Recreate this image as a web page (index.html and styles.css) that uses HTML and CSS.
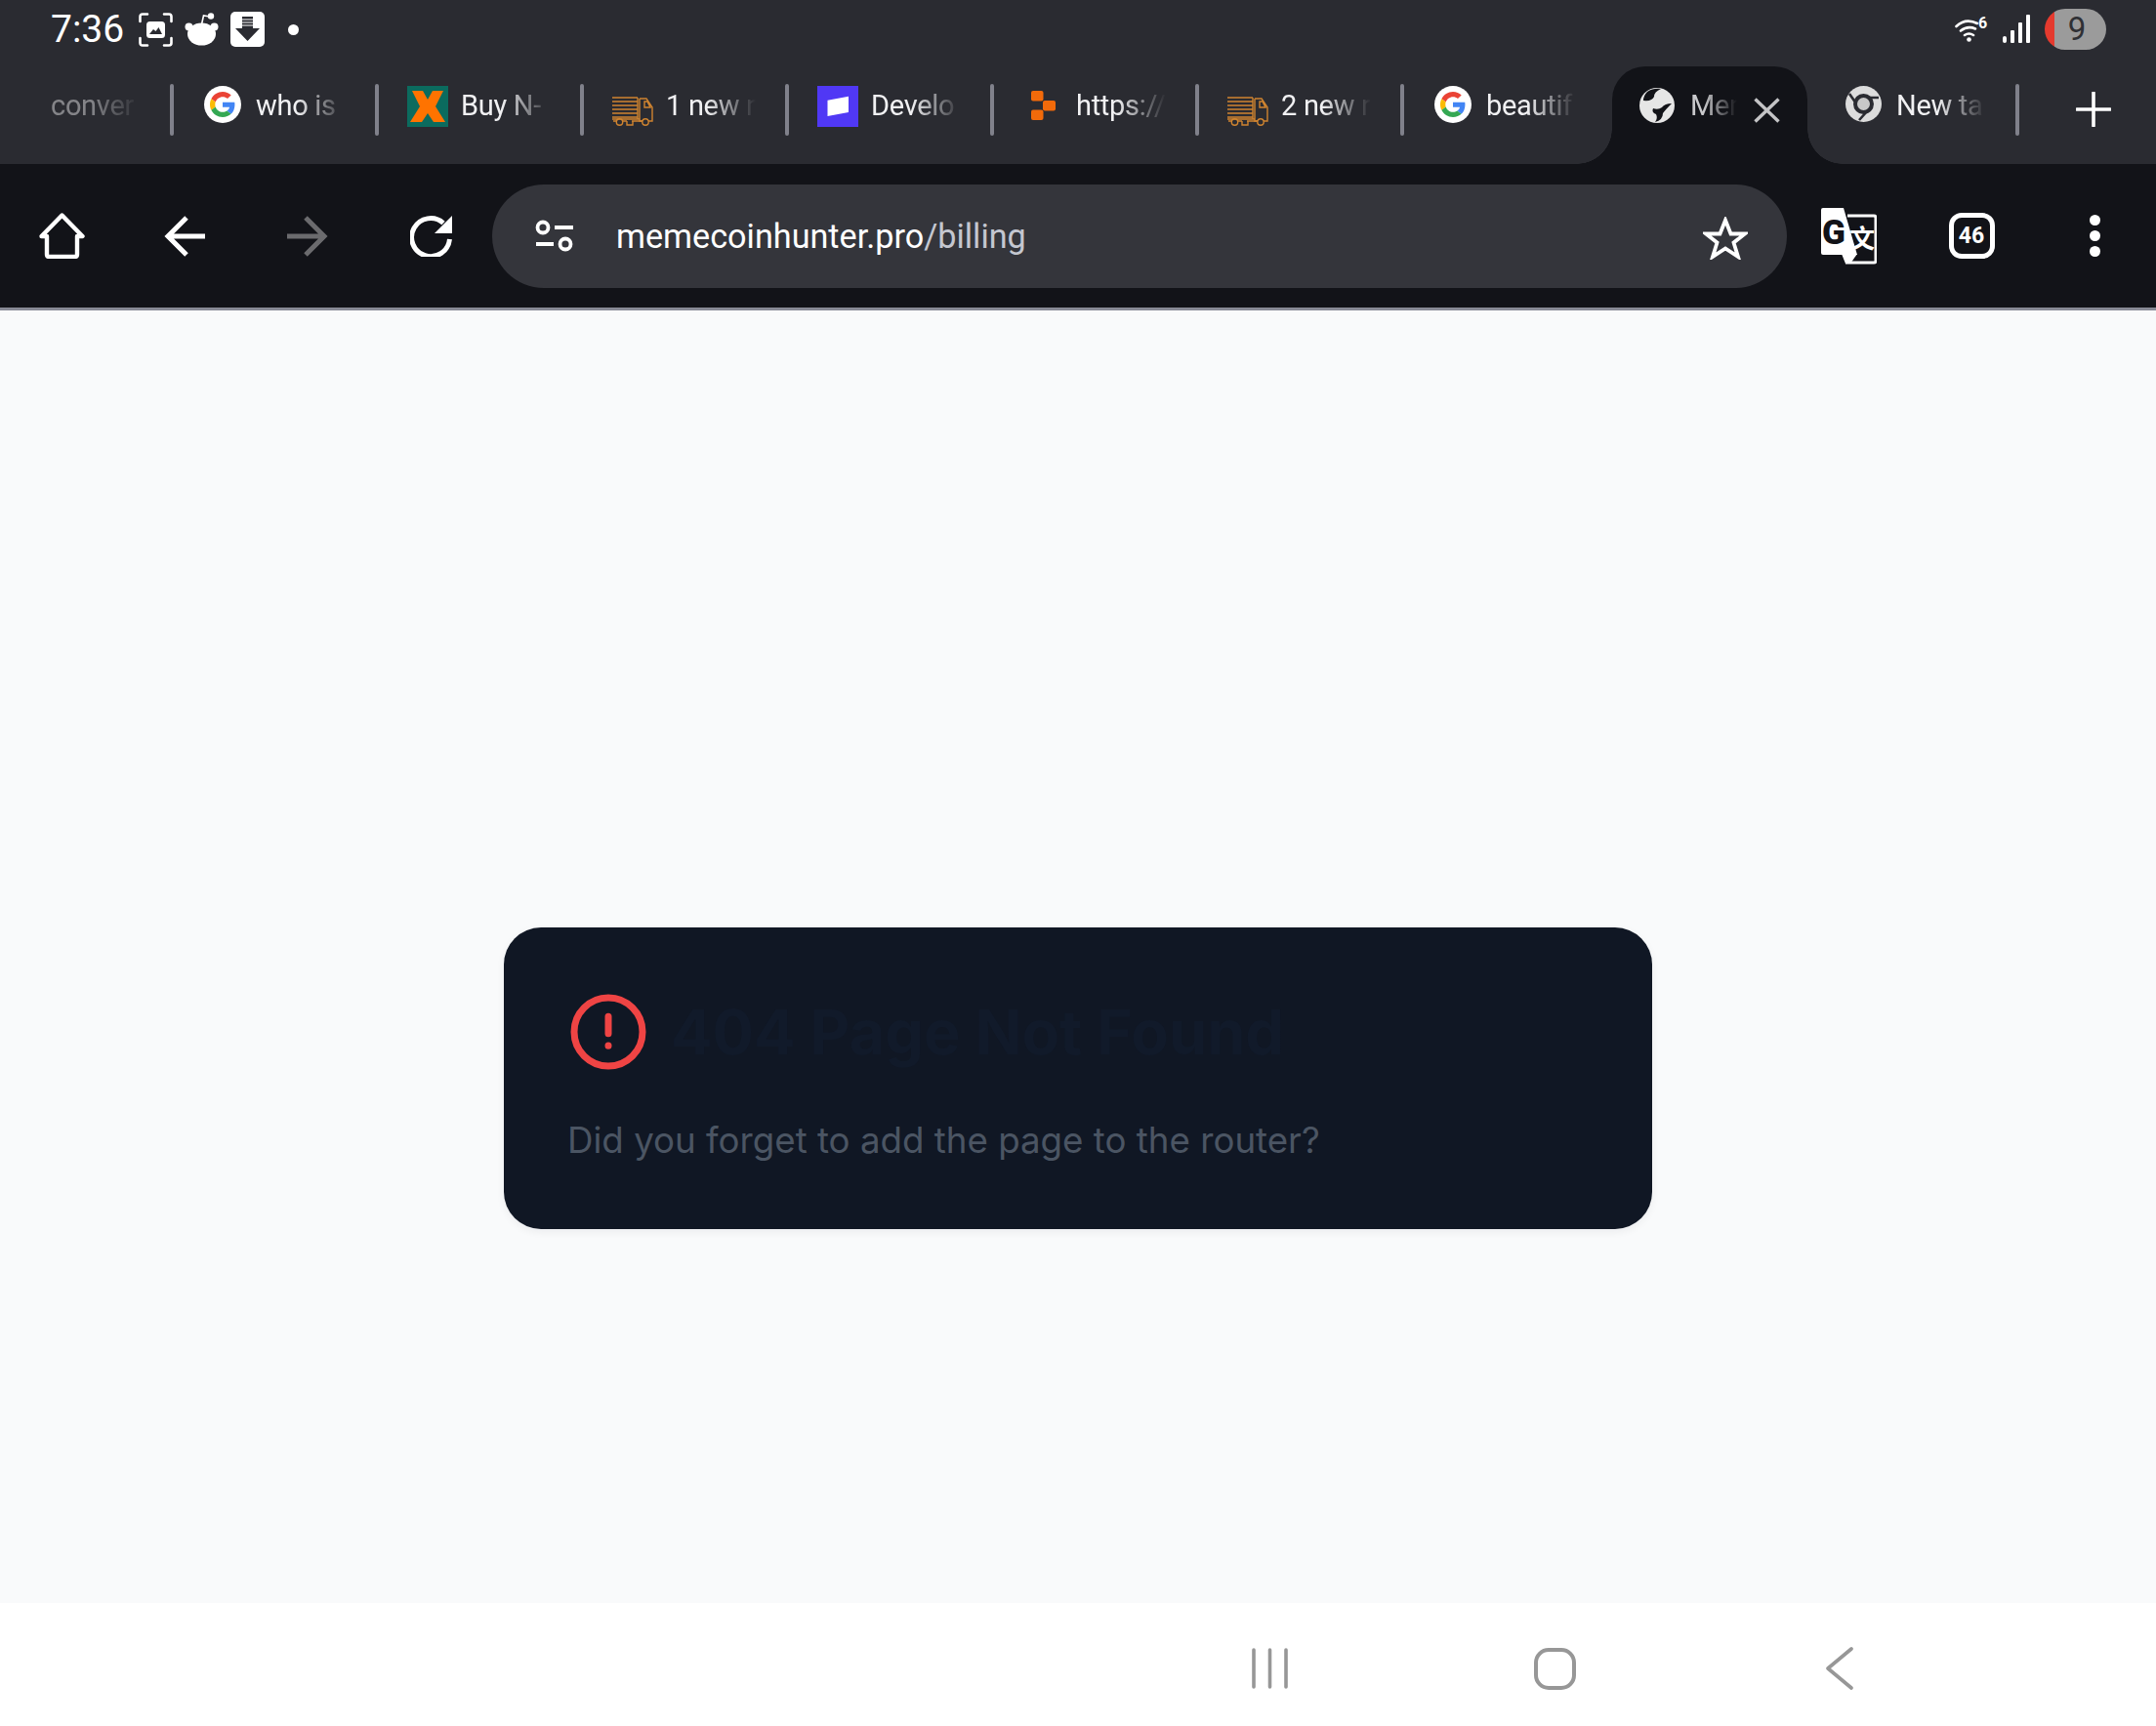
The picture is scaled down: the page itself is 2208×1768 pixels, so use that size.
FILE: index.html
```html
<!DOCTYPE html>
<html lang="en">
<head>
    <meta charset="UTF-8">
    <meta name="viewport" content="width=device-width, initial-scale=1.0">
    <title>memecoinhunter.pro/billing</title>
    <link rel="stylesheet" href="styles.css">
</head>
<body>
    <svg class="defs" width="0" height="0">
        <symbol id="g-logo" viewBox="0 0 48 48">
            <path fill="#EA4335" d="M24 9.5c3.54 0 6.71 1.22 9.21 3.6l6.85-6.85C35.9 2.38 30.47 0 24 0 14.62 0 6.51 5.38 2.56 13.22l7.98 6.19C12.43 13.72 17.74 9.5 24 9.5z"/>
            <path fill="#4285F4" d="M46.98 24.55c0-1.57-.15-3.09-.38-4.55H24v9.02h12.94c-.58 2.96-2.26 5.48-4.78 7.18l7.73 6c4.51-4.18 7.09-10.36 7.09-17.65z"/>
            <path fill="#FBBC05" d="M10.53 28.59c-.48-1.45-.76-2.99-.76-4.59s.27-3.14.76-4.59l-7.98-6.19C.92 16.46 0 20.12 0 24c0 3.88.92 7.54 2.56 10.78l7.97-6.19z"/>
            <path fill="#34A853" d="M24 48c6.48 0 11.93-2.13 15.89-5.81l-7.73-6c-2.15 1.45-4.92 2.3-8.16 2.3-6.26 0-11.57-4.22-13.47-9.91l-7.98 6.19C6.51 42.62 14.62 48 24 48z"/>
        </symbol>
        <symbol id="google-fav" viewBox="0 0 38 38">
            <circle cx="19" cy="19" r="19" fill="#fff"/>
            <use href="#g-logo" x="6" y="6" width="26" height="26"/>
        </symbol>
        <symbol id="truck" viewBox="0 0 42 30">
            <g fill="none" stroke="#cf8430" stroke-width="1.4">
                <path d="M0 1H26M0 5H26M0 9H26M0 13H26M0 17H26M0 21H26"/>
                <path d="M26 1V23"/>
                <path d="M28 2H35L41 11V25H37M28 2V25H31M33 5H36L39 11H33Z"/>
                <path d="M1 25H4M11 25H15M20 25H31M0 23H28"/>
                <circle cx="7.500" cy="26" r="3.200"/>
                <circle cx="34" cy="26" r="3.200"/>
                <path d="M15 25V29H21V25"/>
            </g>
        </symbol>
    </svg>

    <div class="screen">
        <header class="browser">
            <div class="status-bar">
                <div class="status-left">
                    <span class="clock">7:36</span>
                    <svg class="status-icon" width="35" height="35" viewBox="0 0 35 35">
                        <path d="M1.500 9V4Q1.500 1.500 4 1.500H9M26 1.500H31Q33.500 1.500 33.500 4V9M33.500 26V31Q33.500 33.500 31 33.500H26M9 33.500H4Q1.500 33.500 1.500 31V26" fill="none" stroke="#fff" stroke-width="2.600" stroke-linecap="round"/>
                        <rect x="8" y="9" width="19" height="17" rx="3.500" fill="#fff"/>
                        <path d="M11 22L15 17L17.500 19L20.500 15L24 22Z" fill="#2a2b31"/>
                    </svg>
                    <svg class="status-icon" width="35" height="34" viewBox="0 0 35 34">
                        <ellipse cx="17.500" cy="22" rx="14.500" ry="11.500" fill="#fff"/>
                        <circle cx="4.500" cy="14.500" r="4" fill="#fff"/>
                        <circle cx="30.500" cy="14.500" r="4" fill="#fff"/>
                        <path d="M17.500 12L19.500 3L26 4" fill="none" stroke="#fff" stroke-width="1.600"/>
                        <circle cx="27" cy="3.500" r="3.200" fill="#fff"/>
                    </svg>
                    <svg class="status-icon" width="35" height="36" viewBox="0 0 35 36">
                        <rect width="35" height="36" rx="5" fill="#fff"/>
                        <path d="M12 5H23V17H30L17.500 30L5 17H12Z" fill="#2a2b31"/>
                        <path d="M12 8H23M12 11H23M12 14H23" stroke="#fff" stroke-width="1"/>
                    </svg>
                    <span class="status-dot"></span>
                </div>
                <div class="status-right">
                    <svg class="wifi" width="36" height="34" viewBox="0 -4 36 34">
                        <path d="M1.500 10Q11 1 23 7M6 14.500Q13 9 21 12.500M10 19Q14.500 16 19 19" fill="none" stroke="#fff" stroke-width="2.600" stroke-linecap="round"/>
                        <circle cx="14.500" cy="23.500" r="2.300" fill="#fff"/>
                        <text x="24" y="12" class="wifi-num">6</text>
                    </svg>
                    <svg width="28" height="30" viewBox="0 0 28 30">
                        <g fill="#fff">
                            <rect x="0" y="22" width="4" height="7" rx="2"/>
                            <rect x="8" y="16" width="4" height="13" rx="1"/>
                            <rect x="16" y="8" width="4" height="21" rx="1"/>
                            <rect x="24" y="0" width="4" height="29" rx="1"/>
                        </g>
                    </svg>
                    <span class="battery">9</span>
                </div>
            </div>

            <nav class="tab-strip">
                <div class="tab tab-first">
                    <span class="tab-title">conver</span>
                </div>
                <span class="tab-sep"></span>
                <div class="tab">
                    <span class="favicon"><svg width="38" height="38"><use href="#google-fav"/></svg></span>
                    <span class="tab-title">who is</span>
                </div>
                <span class="tab-sep"></span>
                <div class="tab">
                    <span class="favicon">
                        <svg width="42" height="42" viewBox="0 0 42 42">
                            <rect width="42" height="42" fill="#0b6b5e"/>
                            <path d="M5 5H16L21 14L26 5H37L29 21L39 37H27L21 28L15 37H3L13 21Z" fill="#ff7300"/>
                        </svg>
                    </span>
                    <span class="tab-title">Buy N-</span>
                </div>
                <span class="tab-sep"></span>
                <div class="tab">
                    <span class="favicon"><svg class="fav-low" width="42" height="30"><use href="#truck"/></svg></span>
                    <span class="tab-title">1 new n</span>
                </div>
                <span class="tab-sep"></span>
                <div class="tab">
                    <span class="favicon">
                        <svg width="42" height="42" viewBox="0 0 42 42">
                            <rect width="42" height="42" fill="#5038f5"/>
                            <path d="M10.500 14.700L32 10.700V27L10.500 31Z" fill="#fff"/>
                        </svg>
                    </span>
                    <span class="tab-title">Develo</span>
                </div>
                <span class="tab-sep"></span>
                <div class="tab">
                    <span class="favicon">
                        <svg class="fav-mid" width="25" height="30" viewBox="0 0 25 30">
                            <g fill="#f26a0a">
                                <rect width="12.500" height="10.500" rx="2"/>
                                <rect x="12" y="10" width="13" height="10.500" rx="2"/>
                                <rect y="19.500" width="12.500" height="10.500" rx="2"/>
                            </g>
                        </svg>
                    </span>
                    <span class="tab-title">https://</span>
                </div>
                <span class="tab-sep"></span>
                <div class="tab">
                    <span class="favicon"><svg class="fav-low" width="42" height="30"><use href="#truck"/></svg></span>
                    <span class="tab-title">2 new r</span>
                </div>
                <span class="tab-sep"></span>
                <div class="tab">
                    <span class="favicon"><svg width="38" height="38"><use href="#google-fav"/></svg></span>
                    <span class="tab-title">beautif</span>
                </div>
                <div class="tab tab-active">
                    <span class="favicon">
                        <svg class="fav-globe" width="36" height="36" viewBox="0 0 36 36">
                            <circle cx="18" cy="18" r="18" fill="#e6e6e6"/>
                            <path d="M8 4Q14 0 22 1Q15 4 15 9Q13 14 4 13Q4 8 8 4Z" fill="#121318"/>
                            <path d="M33 16Q26 16 23 20Q19 23 14 21Q12 25 17 27Q19 31 16 35Q24 33 24 26Q27 22 33 16Z" fill="#121318"/>
                        </svg>
                    </span>
                    <span class="tab-title tab-title-short">Mem</span>
                    <svg class="tab-close" width="27" height="26" viewBox="0 0 27 26">
                        <path d="M1.500 1.500L25.500 24.500M25.500 1.500L1.500 24.500" stroke="#c4c4c6" stroke-width="3.400"/>
                    </svg>
                </div>
                <div class="tab">
                    <span class="favicon">
                        <svg width="37" height="37" viewBox="0 0 37 37">
                            <circle cx="18.500" cy="18.500" r="18.500" fill="#dcdcdc"/>
                            <path d="M4 8L13 21M34 12H19M14 35L23 25" stroke="#2a2b31" stroke-width="2.600"/>
                            <circle cx="18.500" cy="18.500" r="8.500" fill="#c8c8c8" stroke="#2a2b31" stroke-width="4"/>
                        </svg>
                    </span>
                    <span class="tab-title">New ta</span>
                </div>
                <span class="tab-sep"></span>
                <svg class="tab-plus" width="36" height="36" viewBox="0 0 36 36">
                    <path d="M18 1V35M1 18H35" stroke="#fff" stroke-width="3.600" stroke-linecap="round"/>
                </svg>
            </nav>

            <div class="toolbar">
                <span class="tool-btn">
                    <svg width="47" height="47" viewBox="0 0 47 47">
                        <path d="M2.500 24L23.500 2.500L44.500 24H39V42.500Q39 45 36.500 45H10.500Q8 45 8 42.500V24Z" fill="none" stroke="#fff" stroke-width="4.400" stroke-linejoin="round"/>
                    </svg>
                </span>
                <span class="tool-btn">
                    <svg width="42" height="42" viewBox="0 0 42 42">
                        <path d="M42 21H4M23 2L4 21L23 40" fill="none" stroke="#fff" stroke-width="5"/>
                    </svg>
                </span>
                <span class="tool-btn">
                    <svg width="42" height="42" viewBox="0 0 42 42">
                        <path d="M0 21H38M19 2L38 21L19 40" fill="none" stroke="#6b6b6e" stroke-width="5"/>
                    </svg>
                </span>
                <span class="tool-btn">
                    <svg width="43" height="43" viewBox="0 0 43 43">
                        <path d="M34 8.500A19.500 19.500 0 1 0 40.500 25" fill="none" stroke="#fff" stroke-width="5"/>
                        <path d="M43 1V19H25Z" fill="#fff"/>
                    </svg>
                </span>
                <div class="omnibox">
                    <svg width="39" height="33" viewBox="0 0 39 33">
                        <g fill="none" stroke="#fff" stroke-width="3.800">
                            <circle cx="8" cy="8" r="5.500"/>
                            <circle cx="31" cy="25" r="5.500"/>
                            <path d="M20 8H39M1 25H19"/>
                        </g>
                    </svg>
                    <span class="url">memecoinhunter.pro<span class="url-path">/billing</span></span>
                    <svg class="star" width="46" height="44" viewBox="0 0 46 44">
                        <path d="M23 3.500L28.500 17.500H43L31.500 26.500L36 41L23 32.500L10 41L14.500 26.500L3 17.500H17.500Z" fill="none" stroke="#fff" stroke-width="3.800" stroke-linejoin="miter"/>
                    </svg>
                </div>
                <span class="tool-btn">
                    <svg width="58" height="59" viewBox="0 0 58 59">
                        <path d="M28 9H55Q57 9 57 11V55Q57 57 55 57H26" fill="none" stroke="#fff" stroke-width="3"/>
                        <path d="M3 1H24L38 49H3Q1 49 1 47V3Q1 1 3 1Z" fill="#fff"/>
                        <path d="M22 48H38L31 58H26Z" fill="#fff"/>
                        <text x="2" y="38" class="tr-g">G</text>
                        <text x="30" y="42" class="tr-zh">文</text>
                    </svg>
                </span>
                <span class="tool-btn"><span class="tab-count">46</span></span>
                <span class="tool-btn">
                    <span class="kebab"><i></i><i></i><i></i></span>
                </span>
            </div>
        </header>

        <main class="page">
            <section class="card">
                <div class="card-head">
                    <svg width="84" height="84" viewBox="0 0 24 24">
                        <circle cx="12" cy="12" r="10" fill="none" stroke="#ef4444" stroke-width="2"/>
                        <path d="M12 7.500V12.500M12 16V16.100" fill="none" stroke="#ef4444" stroke-width="2" stroke-linecap="round"/>
                    </svg>
                    <h1>404 Page Not Found</h1>
                </div>
                <p>Did you forget to add the page to the router?</p>
            </section>
        </main>

        <footer class="nav-bar">
            <span class="nav-cell">
                <svg width="37" height="42" viewBox="0 0 37 42">
                    <path d="M2 2V40M18.500 2V40M35 2V40" stroke="#979797" stroke-width="3.600" stroke-linecap="round"/>
                </svg>
            </span>
            <span class="nav-cell">
                <svg width="43" height="43" viewBox="0 0 43 43">
                    <rect x="2" y="2" width="39" height="39" rx="13" fill="none" stroke="#979797" stroke-width="4"/>
                </svg>
            </span>
            <span class="nav-cell">
                <svg width="28" height="44" viewBox="0 0 28 44">
                    <path d="M26 2L2 22L26 42" fill="none" stroke="#979797" stroke-width="3.600" stroke-linecap="round" stroke-linejoin="round"/>
                </svg>
            </span>
        </footer>
    </div>
</body>
</html>
```

FILE: styles.css
```css
* {
    box-sizing: border-box;
}

html, body {
    margin: 0;
    height: 100%;
}

body {
    font-family: Roboto, "Liberation Sans", sans-serif;
    background-color: #f9fafb;
}

svg {
    display: block;
    flex: none;
}

.defs {
    position: absolute;
}

.screen {
    display: flex;
    flex-direction: column;
    width: 2208px;
    height: 1768px;
    overflow: hidden;
}

/* status bar */
.browser {
    flex: none;
    background-color: #2a2b31;
}

.status-bar {
    display: flex;
    justify-content: space-between;
    align-items: center;
    height: 68px;
    padding: 0 51px 8px 52px;
    color: #fff;
}

.status-left {
    display: flex;
    align-items: center;
}

.clock {
    width: 90px;
    font-size: 39px;
}

.status-icon {
    margin-right: 12px;
}

.status-dot {
    width: 11px;
    height: 11px;
    margin-left: 12px;
    border-radius: 50%;
    background-color: #fff;
}

.status-right {
    display: flex;
    align-items: center;
    gap: 15px;
}

.wifi {
    margin-right: -2px;
}

.wifi-num {
    font-size: 16px;
    font-weight: 700;
    fill: #fff;
}

.battery {
    width: 63px;
    height: 42px;
    border-radius: 21px;
    background: linear-gradient(90deg, #e53a2e 10px, #9b9b9b 10px);
    color: #2f3034;
    font-size: 33px;
    line-height: 42px;
    text-align: center;
    padding-left: 3px;
}

/* tabs */
.tab-strip {
    display: flex;
    height: 100px;
}

.tab {
    display: flex;
    position: relative;
    width: 206px;
    padding: 20px 0 0 28px;
    gap: 12px;
    color: #f1f1f3;
}

.tab-first {
    width: 174px;
    padding-left: 52px;
    opacity: 0.45;
}

.tab-active {
    width: 200px;
    margin: 0 7px;
    padding-left: 24px;
    border-radius: 34px 34px 0 0;
    background-color: #121318;
    color: #c9c9cc;
}

.tab-active::before,
.tab-active::after {
    content: "";
    position: absolute;
    bottom: 0;
    width: 36px;
    height: 36px;
}

.tab-active::before {
    left: -36px;
    background: radial-gradient(circle at 0 0, transparent 35.5px, #121318 36px);
}

.tab-active::after {
    right: -36px;
    background: radial-gradient(circle at 100% 0, transparent 35.5px, #121318 36px);
}

.favicon {
    display: flex;
    justify-content: center;
    flex: none;
    width: 44px;
}

.fav-low {
    margin-top: 11px;
}

.fav-mid {
    margin-top: 5px;
}

.fav-globe {
    margin-top: 2px;
}

.tab-title {
    width: 100px;
    height: 38px;
    margin-top: 1px;
    font-size: 29px;
    letter-spacing: -0.3px;
    line-height: 38px;
    white-space: nowrap;
    -webkit-mask-image: linear-gradient(90deg, #000 42px, transparent 92px);
    mask-image: linear-gradient(90deg, #000 42px, transparent 92px);
}

.tab-title-short {
    width: 68px;
    flex: none;
    -webkit-mask-image: linear-gradient(90deg, #000 14px, transparent 48px);
    mask-image: linear-gradient(90deg, #000 14px, transparent 48px);
}

.tab-close {
    margin: 12px 0 0 -15px;
}

.tab-sep {
    flex: none;
    width: 4px;
    height: 53px;
    margin-top: 18px;
    border-radius: 2px;
    background-color: #80818b;
}

.tab-plus {
    margin: 26px 0 0 58px;
}

/* toolbar */
.toolbar {
    display: flex;
    align-items: center;
    height: 150px;
    border-bottom: 3px solid #888a96;
    background-color: #121318;
}

.tool-btn {
    display: flex;
    justify-content: center;
    align-items: center;
    flex: none;
    width: 126px;
}

.omnibox {
    display: flex;
    align-items: center;
    flex: 1;
    height: 106px;
    padding: 0 40px 0 44px;
    border-radius: 53px;
    background-color: #34353b;
}

.url {
    margin-left: 44px;
    color: #fff;
    font-size: 34.2px;
}

.url-path {
    color: #c4c7d0;
}

.star {
    margin: 4px 0 0 auto;
}

.tr-g {
    font-family: Roboto, sans-serif;
    font-size: 35px;
    font-weight: 900;
    fill: #121318;
}

.tr-zh {
    font-family: "Noto Sans CJK SC", sans-serif;
    font-size: 26px;
    font-weight: 700;
    fill: #fff;
}

.tab-count {
    display: flex;
    justify-content: center;
    align-items: center;
    width: 47px;
    height: 47px;
    border: 5px solid #fff;
    border-radius: 13px;
    color: #fff;
    font-size: 23px;
    font-weight: 700;
}

.kebab {
    display: flex;
    flex-direction: column;
    gap: 5px;
}

.kebab i {
    width: 11px;
    height: 11px;
    border-radius: 50%;
    background-color: #fff;
}

/* page */
.page {
    display: flex;
    justify-content: center;
    align-items: flex-start;
    flex: 1;
    padding-top: 632px;
    background-color: #f9fafb;
}

.card {
    width: 1176px;
    padding: 65px 65px 64px;
    border-radius: 38px;
    background-color: #101724;
    box-shadow: 0 3px 8px rgba(17, 24, 39, 0.06);
    font-family: Inter, sans-serif;
}

.card-head {
    display: flex;
    align-items: center;
    gap: 22px;
}

.card h1 {
    margin: 0;
    color: #111a2a;
    font-size: 63px;
    font-weight: 700;
    line-height: 84px;
}

.card p {
    margin: 41px 0 0;
    color: #4b5563;
    font-size: 36.7px;
    line-height: 55px;
}

/* android nav */
.nav-bar {
    display: flex;
    justify-content: flex-end;
    align-items: center;
    flex: none;
    height: 126px;
    padding: 8px 178px 0 0;
    background-color: #fff;
}

.nav-cell {
    display: flex;
    justify-content: center;
    width: 292px;
}
```
